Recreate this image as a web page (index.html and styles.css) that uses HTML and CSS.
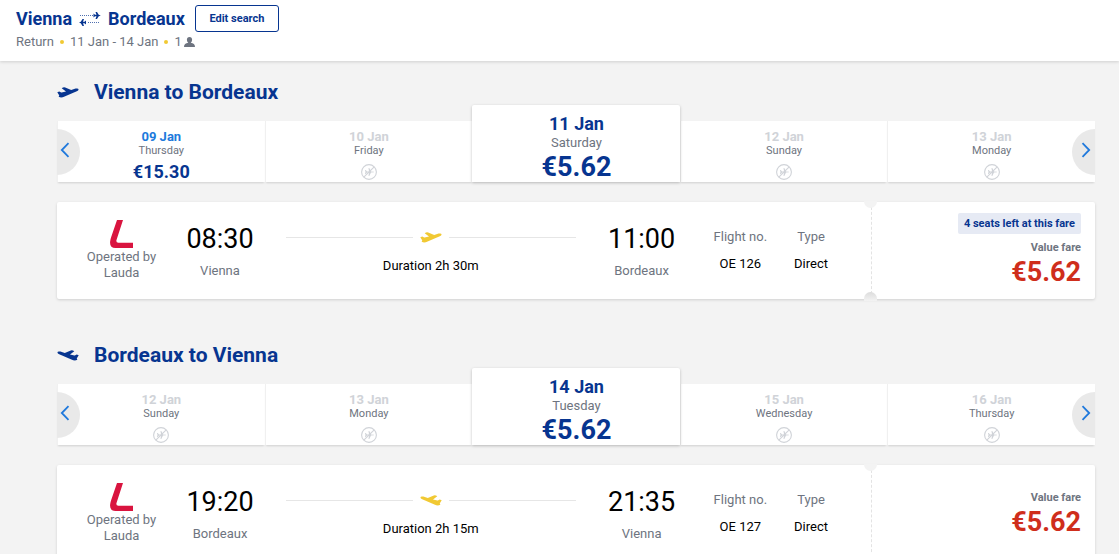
FILE: index.html
```html
<!DOCTYPE html>
<html lang="en">
<head>
    <meta charset="UTF-8">
    <meta name="viewport" content="width=device-width, initial-scale=1.0">
    <title>Vienna - Bordeaux</title>
    <link rel="stylesheet" href="styles.css">
</head>
<body>
    <svg class="defs" aria-hidden="true">
        <symbol id="plane" viewBox="0 0 22 11">
            <path d="M.3 5.2 2.3 4.6Q3.400 5.600 4.600 5.400L9 4.400 4.700 1.300Q6.500 0 8.200.5L14.200 2.900 18.600 1.600Q21.200 1 21.600 2.200 21.500 3.500 19.800 4.300L7.600 9.400Q4.600 11 2.200 10.100 1 9.400 2.300 8.400Z"/>
        </symbol>
        <symbol id="noflight" viewBox="0 0 16 16">
            <circle cx="8" cy="8" r="7.4" fill="none" stroke="#d0d3d8" stroke-width="1.1"/>
            <path d="M2.800 13.200 13.200 2.800" stroke="#d0d3d8" stroke-width="1.100"/>
            <path fill="#d0d3d8" d="M4 6h.8L6 7.500h2L7.500 4h.8L10 7.500l3 .2v.6l-3 .2L8.300 12h-.8L8 8.500H6L4.800 10H4L4.500 8Z"/>
        </symbol>
        <symbol id="lauda" viewBox="0 0 23 28">
            <path fill="#d9143f" d="M7 0h6L6.500 20q-.7 2.800 1.800 2.800H23V28H5.500Q-.8 28 .2 21Q.5 19 1.200 17Z"/>
        </symbol>
        <symbol id="left" viewBox="0 0 10 16">
            <path d="M8.500 1.200 1.800 8l6.700 6.800" fill="none" stroke="#2079dc" stroke-width="1.800"/>
        </symbol>
    </svg>

    <header class="header">
        <div class="route">
            <span>Vienna</span>
            <svg class="swap" viewBox="0 0 22 14" aria-hidden="true">
                <path d="M1 3.500H14M9 10.500H21" stroke="#073590" stroke-dasharray="1 1" opacity=".7"/>
                <path fill="#073590" d="M14.500 1.500 16 2.800H17.500L16.500 0H18L19.700 2.800 21.800 3.500 19.700 4.200 18 7H16.500L17.500 4.200H16L14.500 5.500ZM7 8.500 5.500 9.800H4L5 7H3.500L1.800 9.800 0 10.500 1.800 11.200 3.500 14H5L4 11.200H5.500L7 12.500Z"/>
            </svg>
            <span>Bordeaux</span>
            <button class="edit" type="button">Edit search</button>
        </div>
        <div class="info">
            <span>Return</span><i class="dot"></i><span>11 Jan - 14 Jan</span><i class="dot"></i><span>1</span>
            <svg class="person" viewBox="0 0 11 10" aria-hidden="true">
                <path d="M5.500 0C7.200 0 8.200 1.200 8.100 2.800 8 4.300 7.400 5.300 6.700 5.800 9.500 6.300 11 7.300 11 10H0C0 7.300 1.500 6.300 4.300 5.800 3.600 5.300 3 4.300 2.900 2.800 2.800 1.200 3.800 0 5.500 0Z"/>
            </svg>
        </div>
    </header>

    <main class="main">
        <section class="trip">
            <h2 class="title"><svg class="plane"><use href="#plane"/></svg>Vienna to Bordeaux</h2>
            <div class="dates">
                <button class="arrow prev" type="button" aria-label="Previous"><svg><use href="#left"/></svg></button>
                <button class="day" type="button"><b>09 Jan</b><span>Thursday</span><strong>€15.30</strong></button>
                <button class="day" type="button" disabled><b>10 Jan</b><span>Friday</span><svg><use href="#noflight"/></svg></button>
                <button class="day selected" type="button"><b>11 Jan</b><span>Saturday</span><strong>€5.62</strong></button>
                <button class="day" type="button" disabled><b>12 Jan</b><span>Sunday</span><svg><use href="#noflight"/></svg></button>
                <button class="day" type="button" disabled><b>13 Jan</b><span>Monday</span><svg><use href="#noflight"/></svg></button>
                <button class="arrow next" type="button" aria-label="Next"><svg><use href="#left"/></svg></button>
            </div>
            <div class="card">
                <div class="flight">
                    <div class="operator"><svg><use href="#lauda"/></svg><span>Operated by<br>Lauda</span></div>
                    <div class="stop"><time>08:30</time><span>Vienna</span></div>
                    <div class="duration">
                        <div class="line"><svg class="plane"><use href="#plane"/></svg></div>
                        <span>Duration 2h 30m</span>
                    </div>
                    <div class="stop"><time>11:00</time><span>Bordeaux</span></div>
                    <div class="detail number"><span>Flight no.</span><em>OE 126</em></div>
                    <div class="detail"><span>Type</span><em>Direct</em></div>
                </div>
                <div class="fare">
                    <span class="seats">4 seats left at this fare</span>
                    <span class="label">Value fare</span>
                    <strong class="price">€5.62</strong>
                </div>
            </div>
        </section>

        <section class="trip">
            <h2 class="title"><svg class="plane back"><use href="#plane"/></svg>Bordeaux to Vienna</h2>
            <div class="dates">
                <button class="arrow prev" type="button" aria-label="Previous"><svg><use href="#left"/></svg></button>
                <button class="day" type="button" disabled><b>12 Jan</b><span>Sunday</span><svg><use href="#noflight"/></svg></button>
                <button class="day" type="button" disabled><b>13 Jan</b><span>Monday</span><svg><use href="#noflight"/></svg></button>
                <button class="day selected" type="button"><b>14 Jan</b><span>Tuesday</span><strong>€5.62</strong></button>
                <button class="day" type="button" disabled><b>15 Jan</b><span>Wednesday</span><svg><use href="#noflight"/></svg></button>
                <button class="day" type="button" disabled><b>16 Jan</b><span>Thursday</span><svg><use href="#noflight"/></svg></button>
                <button class="arrow next" type="button" aria-label="Next"><svg><use href="#left"/></svg></button>
            </div>
            <div class="card">
                <div class="flight">
                    <div class="operator"><svg><use href="#lauda"/></svg><span>Operated by<br>Lauda</span></div>
                    <div class="stop"><time>19:20</time><span>Bordeaux</span></div>
                    <div class="duration">
                        <div class="line"><svg class="plane back"><use href="#plane"/></svg></div>
                        <span>Duration 2h 15m</span>
                    </div>
                    <div class="stop"><time>21:35</time><span>Vienna</span></div>
                    <div class="detail number"><span>Flight no.</span><em>OE 127</em></div>
                    <div class="detail"><span>Type</span><em>Direct</em></div>
                </div>
                <div class="fare">
                    <span class="label">Value fare</span>
                    <strong class="price">€5.62</strong>
                </div>
            </div>
        </section>
    </main>
</body>
</html>
```

FILE: styles.css
```css
*{
    box-sizing: border-box;
}
body{
    margin: 0;
    height: 100vh;
    overflow: hidden;
    background-color: #f3f3f3;
    color: #6e7480;
    font: 13px/16px Roboto, sans-serif;
}
button{
    font-family: inherit;
    cursor: pointer;
}
svg{
    display: block;
    flex: none;
}
.defs{
    position: absolute;
    width: 0;
    height: 0;
}

/* header */
.header{
    padding: 5px 16px 9px;
    background-color: #fff;
    box-shadow: 0 1px 3px rgba(0,0,0,.15);
}
.route{
    display: flex;
    align-items: center;
    gap: 7px;
    color: #073590;
    font-size: 18px;
    font-weight: bold;
}
.swap{
    width: 22px;
    height: 14px;
}
.edit{
    width: 84px;
    height: 27px;
    margin-left: 3px;
    padding: 0;
    border: 1px solid #073590;
    border-radius: 3px;
    background-color: #fff;
    color: #073590;
    font-size: 11px;
    font-weight: bold;
}
.info{
    display: flex;
    align-items: center;
    line-height: 20px;
}
.dot{
    width: 4px;
    height: 4px;
    margin: 0 6px;
    border-radius: 50%;
    background-color: #f1c933;
}
.person{
    width: 11px;
    height: 10px;
    margin-left: 2px;
    fill: #6e7480;
}

/* trips */
.main{
    padding: 19px 24px 0 57px;
}
.trip{
    margin-bottom: 44px;
}
.title{
    display: flex;
    align-items: center;
    gap: 15px;
    margin: 0 0 1px;
    color: #073590;
    font-size: 21px;
    line-height: 24px;
}
.plane{
    width: 22px;
    height: 11px;
    fill: currentColor;
}
.back{
    transform: scaleX(-1);
}
.dates{
    position: relative;
    display: flex;
    align-items: flex-end;
    margin-bottom: 20px;
}
.day{
    display: flex;
    flex: 1;
    flex-direction: column;
    align-items: center;
    height: 61px;
    padding: 8px 0 0;
    border: 0;
    border-left: 1px solid #f0f0f0;
    background-color: #fff;
    box-shadow: 0 2px 2px -1px rgba(0,0,0,.15);
    color: #6e7480;
    font-size: 11px;
    line-height: 12px;
}
.day b{
    color: #2079dc;
    font-size: 13px;
    line-height: 16px;
}
.day:disabled b{
    color: #d0d3d8;
}
.day strong{
    margin-top: 4px;
    color: #073590;
    font-size: 18px;
    line-height: 22px;
}
.day svg{
    width: 16px;
    height: 16px;
    margin-top: 7px;
}
.selected{
    position: relative;
    height: 77px;
    border-color: #fff;
    border-radius: 2px 2px 0 0;
    box-shadow: 0 1px 3px rgba(0,0,0,.25);
    font-size: 13px;
    line-height: 16px;
}
.selected b{
    color: #073590;
    font-size: 18px;
    line-height: 22px;
}
.selected strong{
    margin-top: 0;
    font-size: 27px;
    line-height: 32px;
}
.arrow{
    position: absolute;
    bottom: 7px;
    display: flex;
    align-items: center;
    width: 23px;
    height: 46px;
    padding: 0 0 4px 3px;
    border: 0;
    background-color: #e9e9e9;
}
.arrow svg{
    width: 10px;
    height: 16px;
}
.prev{
    left: 0;
    border-radius: 0 23px 23px 0;
}
.next{
    right: 0;
    justify-content: flex-end;
    padding: 0 4px 4px 0;
    border-radius: 23px 0 0 23px;
}
.next svg{
    transform: scaleX(-1);
}

/* flight card */
.card{
    display: flex;
    height: 97px;
    border-radius: 2px;
    background-color: #fff;
    box-shadow: 0 1px 3px rgba(0,0,0,.15);
}
.flight{
    display: flex;
    flex: 1;
    align-items: center;
    padding-right: 43px;
}
.operator{
    display: flex;
    flex-direction: column;
    align-items: center;
    gap: 1px;
    width: 129px;
    text-align: center;
}
.operator svg{
    width: 23px;
    height: 28px;
}
.stop{
    display: flex;
    flex-direction: column;
    align-items: center;
    gap: 8px;
    width: 68px;
}
.stop time{
    color: #000;
    font-size: 27px;
    line-height: 32px;
}
.duration{
    display: flex;
    flex: 1;
    flex-direction: column;
    gap: 12px;
    padding: 2px 32px 0;
    color: #000;
    text-align: center;
}
.line{
    display: flex;
    align-items: center;
    gap: 7px;
    height: 16px;
    color: #f1c933;
}
.line::before, .line::after{
    content: "";
    flex: 1;
    height: 1px;
    background-color: #e6e6e6;
}
.detail{
    display: flex;
    flex-direction: column;
    align-items: center;
    gap: 11px;
}
.number{
    margin: 0 27px 0 38px;
}
.detail em{
    color: #000;
    font-style: normal;
}
.fare{
    position: relative;
    display: flex;
    flex-direction: column;
    align-items: flex-end;
    justify-content: center;
    width: 224px;
    padding-right: 14px;
    border-left: 1px dashed #e3e3e3;
}
.fare::before, .fare::after{
    content: "";
    position: absolute;
    left: -8px;
    width: 13px;
    background-color: #f3f3f3;
}
.fare::before{
    top: -1px;
    height: 7px;
    border-radius: 0 0 7px 7px;
}
.fare::after{
    bottom: -2px;
    height: 9px;
    border-radius: 7px 7px 0 0;
    background: linear-gradient(#dcdcdc, #f3f3f3);
}
.seats{
    margin-bottom: 6px;
    padding: 0 6px;
    border-radius: 2px;
    background-color: #e6eaf4;
    color: #073590;
    font-size: 11px;
    font-weight: bold;
    line-height: 21px;
}
.label{
    font-size: 11px;
    font-weight: bold;
}
.price{
    color: #cf2e1c;
    font-size: 27px;
    line-height: 32px;
}
```
